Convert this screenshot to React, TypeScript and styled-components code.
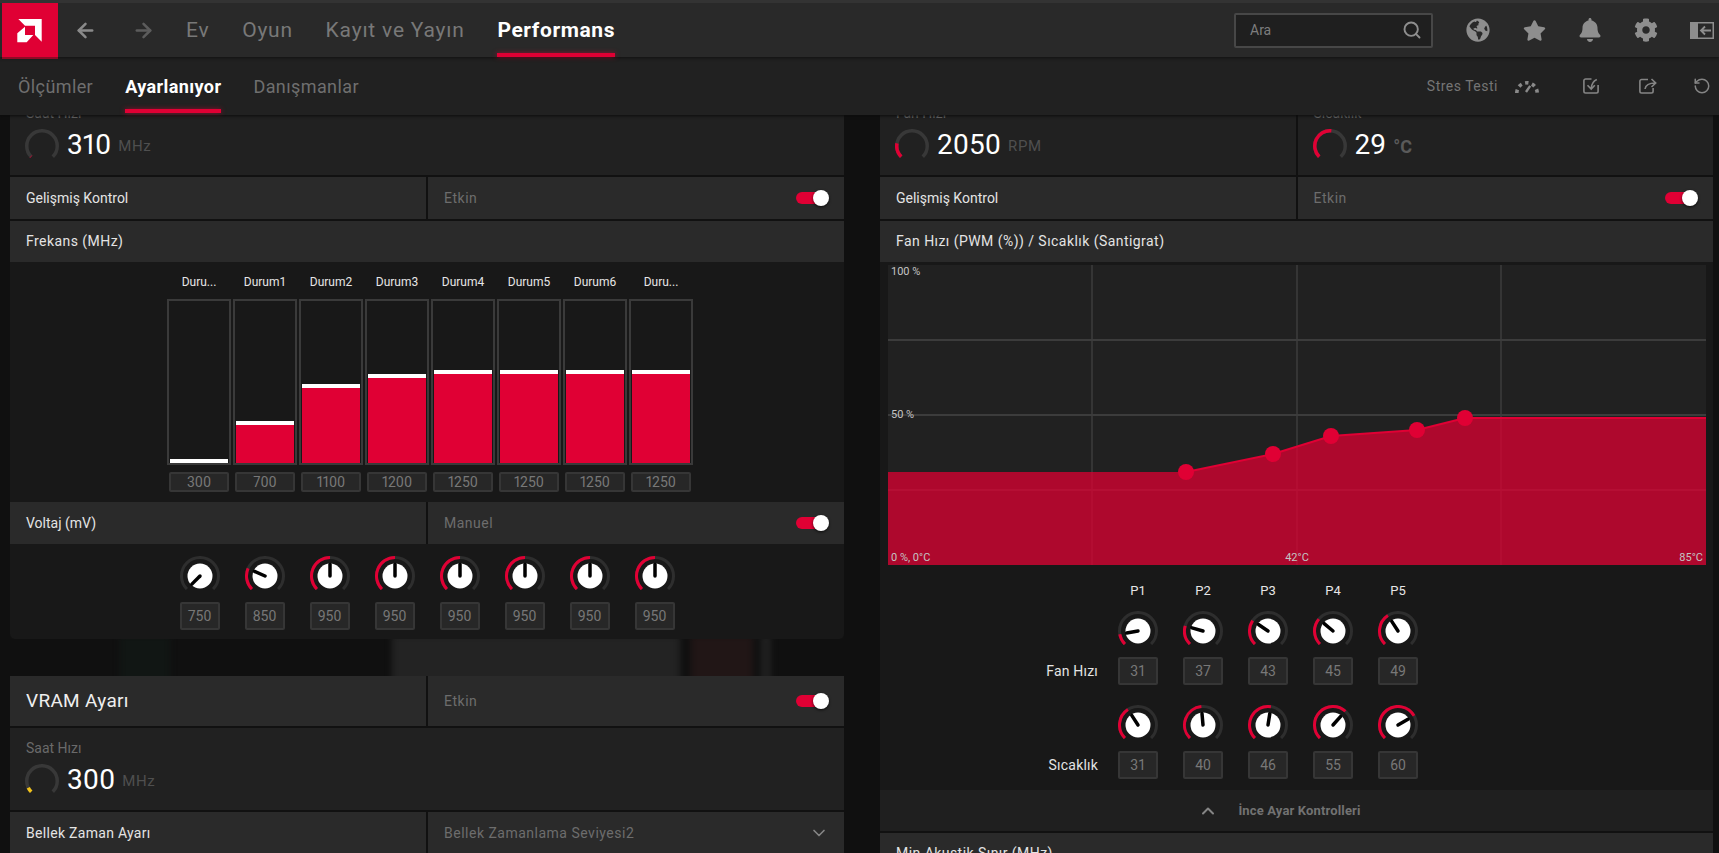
import React from "react";
import styled, { createGlobalStyle } from "styled-components";
import { ArrowLeft, ArrowRight, Search, ChevronDown, ChevronUp, RotateCcw } from "lucide-react";
import { FaGlobeAmericas, FaStar, FaBell, FaCog } from "react-icons/fa";

const RED = "#e00034";

const Global = createGlobalStyle`
  html, body { margin: 0; padding: 0; background: #101010; }
  * { box-sizing: border-box; }
  body { font-family: Roboto, "Liberation Sans", sans-serif; }
`;

const Page = styled.div`
  position: relative;
  width: 1719px;
  height: 853px;
  overflow: hidden;
  display: flex;
  flex-direction: column;
  background: #101010;
`;

const Header = styled.header`
  position: relative;
  z-index: 3;
  flex: 0 0 57px;
  height: 57px;
  min-height: 0;
  display: flex;
  align-items: flex-start;
  border-top: 3px solid #333;
  background: #292929;
  box-shadow: 0 1px 3px #111;
`;

const Logo = styled.div`
  flex: 0 0 56px;
  height: 56px;
  margin-left: 2px;
  background: ${RED};
  border-bottom: 2px solid #8f0a26;
  display: flex;
`;

const NavArrow = styled.div<{ $ml: number; $dim?: boolean }>`
  margin-left: ${(p) => p.$ml}px;
  height: 54px;
  display: flex;
  align-items: center;
  color: ${(p) => (p.$dim ? "#5c5c5c" : "#8a8a8a")};
`;

const NavList = styled.nav`
  margin-left: 31px;
  display: flex;
  gap: 32.7px;
`;

const NavItem = styled.div<{ $active?: boolean }>`
  position: relative;
  display: flex;
  align-items: center;
  height: 54px;
  font-size: 21px;
  letter-spacing: ${(p) => (p.$active ? 0.6 : 0.8)}px;
  font-weight: ${(p) => (p.$active ? 700 : 400)};
  color: ${(p) => (p.$active ? "#fff" : "#787878")};
  ${(p) =>
    p.$active &&
    `&::after { content: ""; position: absolute; left: 0; right: 0; bottom: 0; height: 4px; background: ${RED}; box-shadow: 0 0 5px rgba(224,0,52,.6); }`}
`;

const HeaderRight = styled.div`
  margin-left: auto;
  height: 54px;
  display: flex;
  align-items: center;
  padding-right: 5px;
`;

const SearchBox = styled.div`
  width: 199px;
  height: 35px;
  border: 2px solid #474747;
  background: #1f1f1f;
  border-radius: 2px;
  display: flex;
  align-items: center;
  justify-content: space-between;
  padding: 0 9px 0 14px;
  font-size: 14px;
  color: #7d7d7d;
`;

const HeaderIconRow = styled.div`
  margin-left: 17px;
  display: flex;
  align-items: center;
  color: #8e8e8e;
`;

const HeaderIcon = styled.div`
  width: 56px;
  display: flex;
  justify-content: center;
`;

const SubBar = styled.div`
  position: relative;
  z-index: 2;
  flex: 0 0 58px;
  display: flex;
  align-items: flex-start;
  padding: 0 8px 0 18px;
  background: #212121;
  box-shadow: 0 1px 3px #0c0c0c;
`;

const SubTabs = styled.div`
  display: flex;
  gap: 32px;
`;

const SubTab = styled.div<{ $active?: boolean }>`
  position: relative;
  display: flex;
  align-items: center;
  height: 56px;
  padding-top: 3px;
  font-size: 18px;
  letter-spacing: 0.4px;
  font-weight: ${(p) => (p.$active ? 700 : 400)};
  color: ${(p) => (p.$active ? "#fff" : "#6f6f6f")};
  ${(p) =>
    p.$active &&
    `&::after { content: ""; position: absolute; left: 0; right: 0; bottom: 0; height: 4px; background: ${RED}; box-shadow: 0 0 5px rgba(224,0,52,.6); }`}
`;

const SubRight = styled.div`
  margin-left: auto;
  height: 58px;
  display: flex;
  align-items: center;
  color: #858585;
`;

const StressLabel = styled.span`
  font-size: 14px;
  letter-spacing: 0.5px;
  color: #757575;
  margin-right: 17px;
`;

const ToolIcon = styled.div<{ $ml?: number }>`
  margin-left: ${(p) => p.$ml ?? 0}px;
  display: flex;
  align-items: center;
`;

const Main = styled.main`
  position: relative;
  flex: 1;
  min-height: 0;
  overflow: hidden;
  display: grid;
  grid-template-columns: 834px 833px;
  column-gap: 36px;
  padding: 0 6px 0 10px;
`;

const Backdrop = styled.div`
  position: absolute;
  left: 0;
  right: 0;
  top: 520px;
  height: 50px;
  filter: blur(3px);
  display: flex;
`;

const Smear = styled.div<{ $w: number; $ml: number; $c: string }>`
  width: ${(p) => p.$w}px;
  margin-left: ${(p) => p.$ml}px;
  background: ${(p) => p.$c};
`;

const Column = styled.div`
  position: relative;
  margin-top: -22px;
  display: flex;
  flex-direction: column;
`;

const Stack = styled.section`
  display: flex;
  flex-direction: column;
  gap: 2px;
  background: #111;
`;

const SplitRow = styled.div<{ $h?: number }>`
  height: ${(p) => p.$h ?? 42}px;
  display: grid;
  grid-template-columns: 1fr 1fr;
  column-gap: 2px;
`;

const RowCell = styled.div`
  display: flex;
  align-items: center;
  justify-content: space-between;
  padding: 0 16px 1px;
  background: #2a2a2a;
  font-size: 14px;
  color: #e4e4e4;
`;

const LooseCell = styled(RowCell)`
  letter-spacing: 0.3px;
`;

const RowValue = styled(RowCell)`
  color: #6d6d6d;
  padding-right: 15px;
  letter-spacing: 0.5px;
`;

const BigTitle = styled(RowCell)`
  font-size: 19px;
  letter-spacing: 0.3px;
  color: #eee;
`;

const FullRow = styled.div<{ $h?: number }>`
  height: ${(p) => p.$h ?? 41}px;
  display: flex;
  align-items: center;
  padding: 0 16px 1px;
  background: #2a2a2a;
  font-size: 14px;
  letter-spacing: 0.45px;
  color: #e4e4e4;
`;

const MeterRow = styled.div`
  display: grid;
  grid-template-columns: 1fr 1fr;
  column-gap: 2px;
`;

const MeterCell = styled.div`
  height: 82px;
  padding: 11px 16px 0 15px;
  background: #212121;
`;

const MeterLabel = styled.div`
  height: 25px;
  padding-left: 1px;
  font-size: 14px;
  line-height: 18px;
  color: #6a6a6a;
`;

const MeterBody = styled.div`
  display: flex;
  align-items: center;
  height: 30px;
`;

const MeterValue = styled.span`
  margin-left: 8px;
  font-size: 28px;
  font-variant-numeric: proportional-nums;
  color: #fff;
`;

const MeterUnit = styled.span<{ $strong?: boolean }>`
  margin-left: 7px;
  padding-top: 4px;
  font-size: ${(p) => (p.$strong ? 18 : 15)}px;
  letter-spacing: ${(p) => (p.$strong ? 0 : 0.6)}px;
  font-weight: ${(p) => (p.$strong ? 700 : 400)};
  color: ${(p) => (p.$strong ? "#5a5a5a" : "#4f4f4f")};
`;

const DarkArea = styled.div`
  background: #181818;
`;

const BarsArea = styled(DarkArea)`
  height: 240px;
  margin: -2px 0;
  padding-left: 6px;
  display: flex;
  justify-content: center;
  gap: 2px;
`;

const BarColumn = styled.div`
  width: 64px;
  display: flex;
  flex-direction: column;
  align-items: center;
`;

const BarLabel = styled.div`
  height: 37px;
  line-height: 40px;
  font-size: 12px;
  color: #e6e6e6;
`;

const BarTrack = styled.div`
  width: 64px;
  height: 166px;
  border: 2px solid #3a3a3a;
  padding: 0 1px;
  display: flex;
  align-items: flex-end;
  background: #181818;
`;

const BarFill = styled.div`
  width: 100%;
  background: ${RED};
  border-top: 4px solid #fff;
`;

const BarValue = styled.div`
  margin-top: 7px;
  width: 60px;
  height: 20px;
  display: flex;
  align-items: center;
  justify-content: center;
  border: 2px solid #363636;
  border-radius: 2px;
  background: #272727;
  font-size: 14px;
  font-variant-numeric: proportional-nums;
  color: #787878;
`;

const KnobsArea = styled(DarkArea)`
  height: 95px;
  margin-top: -2px;
  padding-top: 12px;
  border-radius: 0 0 5px 5px;
  display: flex;
  justify-content: center;
  gap: 25px;
`;

const KnobColumn = styled.div`
  width: 40px;
  display: flex;
  flex-direction: column;
  gap: 12px;
`;

const ValueBox = styled.div`
  width: 40px;
  height: 28px;
  display: flex;
  align-items: center;
  justify-content: center;
  border: 2px solid #363636;
  border-radius: 2px;
  background: #272727;
  font-size: 14px;
  color: #787878;
`;

const SvgBlock = styled.svg`
  display: block;
`;

const Spacer = styled.div`
  flex: 0 0 37px;
`;

const ChartArea = styled(DarkArea)`
  height: 303px;
  margin-top: -2px;
  padding: 3px 7px 0 8px;
`;

const AxisText = styled.text`
  font-family: Roboto, "Liberation Sans", sans-serif;
  font-size: 11px;
  fill: #c4c4c4;
`;

const CurveTable = styled(DarkArea)`
  height: 225px;
  margin-top: -2px;
  display: flex;
  flex-direction: column;
  gap: 20px;
`;

const CurveHead = styled.div`
  height: 26px;
  padding: 16px 0 0 238px;
  display: flex;
  gap: 25px;
`;

const HeadCell = styled.div`
  width: 40px;
  height: 20px;
  line-height: 20px;
  text-align: center;
  font-size: 13px;
  color: #e6e6e6;
`;

const CurveRow = styled.div`
  display: flex;
  align-items: flex-end;
  gap: 25px;
`;

const CurveName = styled.div`
  width: 218px;
  margin-right: -5px;
  height: 28px;
  line-height: 28px;
  text-align: right;
  font-size: 14px;
  letter-spacing: 0.2px;
  color: #e4e4e4;
`;

const CollapseRow = styled.div`
  height: 41px;
  margin-top: -2px;
  display: flex;
  align-items: center;
  justify-content: center;
  gap: 20px;
  padding-right: 34px;
  background: #1f1f1f;
  font-size: 13px;
  letter-spacing: 0.15px;
  font-weight: 700;
  color: #727272;
`;

const ToggleBox = styled.div`
  position: relative;
  width: 33px;
  height: 16px;
`;

const ToggleTrack = styled.div`
  position: absolute;
  left: 0;
  top: 2px;
  width: 26px;
  height: 12px;
  border-radius: 6px;
  background: ${RED};
`;

const ToggleThumb = styled.div`
  position: absolute;
  right: 0;
  top: 0;
  width: 16px;
  height: 16px;
  border-radius: 50%;
  background: #fff;
  box-shadow: 0 1px 3px rgba(0, 0, 0, 0.7);
`;

const Toggle = () => (
  <ToggleBox>
    <ToggleTrack />
    <ToggleThumb />
  </ToggleBox>
);

const polar = (cx: number, cy: number, r: number, deg: number) => {
  const a = ((deg - 90) * Math.PI) / 180;
  return [cx + r * Math.cos(a), cy + r * Math.sin(a)];
};

const arc = (cx: number, cy: number, r: number, a0: number, a1: number) => {
  const [x0, y0] = polar(cx, cy, r, a0);
  const [x1, y1] = polar(cx, cy, r, a1);
  const large = a1 - a0 > 180 ? 1 : 0;
  return `M${x0.toFixed(2)} ${y0.toFixed(2)}A${r} ${r} 0 ${large} 1 ${x1.toFixed(2)} ${y1.toFixed(2)}`;
};

const Gauge = ({ angle, color = RED }: { angle: number; color?: string }) => (
  <SvgBlock width={34} height={30} viewBox="0 0 34 30" fill="none">
    <path d={arc(17, 17, 15.25, -135, 135)} stroke="#383838" strokeWidth={3.5} />
    <path d={arc(17, 17, 15.25, -135, angle)} stroke={color} strokeWidth={3.5} />
  </SvgBlock>
);

const Knob = ({ angle }: { angle: number }) => {
  const [tx, ty] = polar(20, 20, 11.5, angle);
  return (
    <SvgBlock width={40} height={34} viewBox="0 0 40 34" fill="none">
      <path d={arc(20, 20, 18.5, -135, 135)} stroke="#2e2e2e" strokeWidth={3} />
      {angle > -134 && <path d={arc(20, 20, 18.5, -135, angle)} stroke={RED} strokeWidth={3} />}
      <circle cx={20} cy={20} r={12.5} fill="#fff" />
      <line x1={20} y1={20} x2={tx} y2={ty} stroke="#000" strokeWidth={3.5} strokeLinecap="round" />
    </SvgBlock>
  );
};

const AmdLogo = () => (
  <SvgBlock width={56} height={54} viewBox="0 0 56 54">
    <path
      fill="#fff"
      d="M16.3 16H39.7V38.7L33 32V22.7H23ZM23 23.7 15.3 30.3V39.3H24.7L31.3 32H23Z"
    />
  </SvgBlock>
);

const PanelIcon = () => (
  <SvgBlock width={24} height={17} viewBox="0 0 24 17">
    <path fill="#8e8e8e" fillRule="evenodd" d="M0 0H24V17H0ZM8 1.5V15.5H22.5V1.5Z" />
    <path d="M21 8.5H11M15 4.5 11 8.5 15 12.5" stroke="#8e8e8e" strokeWidth={1.8} fill="none" />
  </SvgBlock>
);

const StressIcon = () => (
  <SvgBlock width={24} height={14} viewBox="0 0 24 14" fill="none" stroke="#8a8a8a">
    <path d="M1.8 14A10.2 10.2 0 0 1 22.2 14" strokeWidth={3.6} strokeDasharray="3.4 3.6" />
    <path d="M11 13 15.2 6.8" strokeWidth={2.4} />
  </SvgBlock>
);

const ImportIcon = () => (
  <SvgBlock width={16} height={16} viewBox="0 0 16 16" fill="none" stroke="#858585" strokeWidth={1.6}>
    <path d="M8.5 1H2.6A1.7 1.7 0 0 0 .9 2.7V13.3A1.7 1.7 0 0 0 2.6 15H13.4A1.7 1.7 0 0 0 15.1 13.3V7" />
    <path d="M13.8 1.5C10.5 3 8.5 6 8.2 10.5M4.5 7.2 8.2 11 11.8 7.2" />
  </SvgBlock>
);

const ExportIcon = () => (
  <SvgBlock width={18} height={16} viewBox="0 0 18 16" fill="none" stroke="#858585" strokeWidth={1.6}>
    <path d="M9 1.5H2.6A1.7 1.7 0 0 0 .9 3.2V13.3A1.7 1.7 0 0 0 2.6 15H12.4A1.7 1.7 0 0 0 14.1 13.3V10" />
    <path d="M6 11C6.5 7.5 9.5 5 16.5 5M12.5 1 16.7 5 12.5 9" />
  </SvgBlock>
);

const bars = [
  { label: "Duru...", value: 300, h: 4 },
  { label: "Durum1", value: 700, h: 42 },
  { label: "Durum2", value: 1100, h: 79 },
  { label: "Durum3", value: 1200, h: 89 },
  { label: "Durum4", value: 1250, h: 93 },
  { label: "Durum5", value: 1250, h: 93 },
  { label: "Durum6", value: 1250, h: 93 },
  { label: "Duru...", value: 1250, h: 93 },
];

const voltages = [
  { v: 750, a: -135 },
  { v: 850, a: -66 },
  { v: 950, a: 0 },
  { v: 950, a: 0 },
  { v: 950, a: 0 },
  { v: 950, a: 0 },
  { v: 950, a: 0 },
  { v: 950, a: 0 },
];

const fanRow = [
  { v: 31, a: -100 },
  { v: 37, a: -74 },
  { v: 43, a: -56 },
  { v: 45, a: -50 },
  { v: 49, a: -33 },
];

const tempRow = [
  { v: 31, a: -33 },
  { v: 40, a: -5 },
  { v: 46, a: 9 },
  { v: 55, a: 42 },
  { v: 60, a: 60 },
];

const points = [
  [298, 207],
  [385, 189],
  [443, 171],
  [529, 165],
  [577, 153],
];

const FanChart = () => {
  const curve = `${points.map((p) => p.join(" ")).join(" ")} 818 153`;
  return (
    <SvgBlock width={818} height={300} viewBox="0 0 818 300">
      <rect width={818} height={300} fill="#212121" />
      <g stroke="#3c3c3c" strokeWidth={2}>
        <path d="M204 0V300M409 0V300M613 0V300" strokeWidth={1.5} />
        <path d="M0 75H818M0 150H818M0 225H818" />
      </g>
      <path d={`M0 207 ${curve} V300 H0Z`} fill="#dd0031" fillOpacity={0.75} />
      <path d={`M${curve}`} fill="none" stroke={RED} strokeWidth={2} />
      {points.map(([x, y]) => (
        <circle key={x} cx={x} cy={y} r={8} fill={RED} />
      ))}
      <AxisText x={3} y={10}>100 %</AxisText>
      <AxisText x={3} y={153}>50 %</AxisText>
      <AxisText x={3} y={296}>0 %, 0°C</AxisText>
      <AxisText x={409} y={296} textAnchor="middle">42°C</AxisText>
      <AxisText x={815} y={296} textAnchor="end">85°C</AxisText>
    </SvgBlock>
  );
};

const KnobSet = ({ name, data }: { name: string; data: { v: number; a: number }[] }) => (
  <CurveRow>
    <CurveName>{name}</CurveName>
    {data.map((d, i) => (
      <KnobColumn key={i}>
        <Knob angle={d.a} />
        <ValueBox>{d.v}</ValueBox>
      </KnobColumn>
    ))}
  </CurveRow>
);

export default function App() {
  return (
    <Page>
      <Global />
      <Header>
        <Logo>
          <AmdLogo />
        </Logo>
        <NavArrow $ml={16}>
          <ArrowLeft size={23} strokeWidth={2.6} />
        </NavArrow>
        <NavArrow $ml={35} $dim>
          <ArrowRight size={23} strokeWidth={2.6} />
        </NavArrow>
        <NavList>
          <NavItem>Ev</NavItem>
          <NavItem>Oyun</NavItem>
          <NavItem>Kayıt ve Yayın</NavItem>
          <NavItem $active>Performans</NavItem>
        </NavList>
        <HeaderRight>
          <SearchBox>
            Ara
            <Search size={20} strokeWidth={2.3} color="#8e8e8e" />
          </SearchBox>
          <HeaderIconRow>
            <HeaderIcon>
              <FaGlobeAmericas size={24} />
            </HeaderIcon>
            <HeaderIcon>
              <FaStar size={23} />
            </HeaderIcon>
            <HeaderIcon>
              <FaBell size={24} />
            </HeaderIcon>
            <HeaderIcon>
              <FaCog size={24} />
            </HeaderIcon>
          </HeaderIconRow>
          <ToolIcon $ml={16}>
            <PanelIcon />
          </ToolIcon>
        </HeaderRight>
      </Header>

      <SubBar>
        <SubTabs>
          <SubTab>Ölçümler</SubTab>
          <SubTab $active>Ayarlanıyor</SubTab>
          <SubTab>Danışmanlar</SubTab>
        </SubTabs>
        <SubRight>
          <StressLabel>Stres Testi</StressLabel>
          <ToolIcon>
            <StressIcon />
          </ToolIcon>
          <ToolIcon $ml={44}>
            <ImportIcon />
          </ToolIcon>
          <ToolIcon $ml={40}>
            <ExportIcon />
          </ToolIcon>
          <ToolIcon $ml={36}>
            <RotateCcw size={18} strokeWidth={2} />
          </ToolIcon>
        </SubRight>
      </SubBar>

      <Main>
        <Backdrop>
          <Smear $w={50} $ml={120} $c="#111614" />
          <Smear $w={288} $ml={222} $c="#232323" />
          <Smear $w={62} $ml={11} $c="#211616" />
          <Smear $w={10} $ml={8} $c="#202020" />
        </Backdrop>

        <Column>
          <Stack>
            <MeterCell>
              <MeterLabel>Saat Hızı</MeterLabel>
              <MeterBody>
                <Gauge angle={-133} />
                <MeterValue>310</MeterValue>
                <MeterUnit>MHz</MeterUnit>
              </MeterBody>
            </MeterCell>
            <SplitRow>
              <RowCell>Gelişmiş Kontrol</RowCell>
              <RowValue>
                Etkin
                <Toggle />
              </RowValue>
            </SplitRow>
            <FullRow>Frekans (MHz)</FullRow>
            <BarsArea>
              {bars.map((b, i) => (
                <BarColumn key={i}>
                  <BarLabel>{b.label}</BarLabel>
                  <BarTrack>
                    <BarFill style={{ height: b.h }} />
                  </BarTrack>
                  <BarValue>{b.value}</BarValue>
                </BarColumn>
              ))}
            </BarsArea>
            <SplitRow>
              <RowCell>Voltaj (mV)</RowCell>
              <RowValue>
                Manuel
                <Toggle />
              </RowValue>
            </SplitRow>
            <KnobsArea>
              {voltages.map((k, i) => (
                <KnobColumn key={i}>
                  <Knob angle={k.a} />
                  <ValueBox>{k.v}</ValueBox>
                </KnobColumn>
              ))}
            </KnobsArea>
          </Stack>
          <Spacer />
          <Stack>
            <SplitRow $h={50}>
              <BigTitle>VRAM Ayarı</BigTitle>
              <RowValue>
                Etkin
                <Toggle />
              </RowValue>
            </SplitRow>
            <MeterCell>
              <MeterLabel>Saat Hızı</MeterLabel>
              <MeterBody>
                <Gauge angle={-116} color="#f2c21a" />
                <MeterValue>300</MeterValue>
                <MeterUnit>MHz</MeterUnit>
              </MeterBody>
            </MeterCell>
            <SplitRow>
              <LooseCell>Bellek Zaman Ayarı</LooseCell>
              <RowValue>
                Bellek Zamanlama Seviyesi2
                <ChevronDown size={20} strokeWidth={2} color="#858585" />
              </RowValue>
            </SplitRow>
          </Stack>
        </Column>

        <Column>
          <Stack>
            <MeterRow>
              <MeterCell>
                <MeterLabel>Fan Hızı</MeterLabel>
                <MeterBody>
                  <Gauge angle={-80} />
                  <MeterValue>2050</MeterValue>
                  <MeterUnit>RPM</MeterUnit>
                </MeterBody>
              </MeterCell>
              <MeterCell>
                <MeterLabel>Sıcaklık</MeterLabel>
                <MeterBody>
                  <Gauge angle={5} />
                  <MeterValue>29</MeterValue>
                  <MeterUnit $strong>°C</MeterUnit>
                </MeterBody>
              </MeterCell>
            </MeterRow>
            <SplitRow>
              <RowCell>Gelişmiş Kontrol</RowCell>
              <RowValue>
                Etkin
                <Toggle />
              </RowValue>
            </SplitRow>
            <FullRow>Fan Hızı (PWM (%)) / Sıcaklık (Santigrat)</FullRow>
            <ChartArea>
              <FanChart />
            </ChartArea>
            <CurveTable>
              <CurveHead>
                {["P1", "P2", "P3", "P4", "P5"].map((p) => (
                  <HeadCell key={p}>{p}</HeadCell>
                ))}
              </CurveHead>
              <KnobSet name="Fan Hızı" data={fanRow} />
              <KnobSet name="Sıcaklık" data={tempRow} />
            </CurveTable>
            <CollapseRow>
              <ChevronUp size={20} strokeWidth={2.4} color="#858585" />
              İnce Ayar Kontrolleri
            </CollapseRow>
            <FullRow>Min Akustik Sınır (MHz)</FullRow>
          </Stack>
        </Column>
      </Main>
    </Page>
  );
}
